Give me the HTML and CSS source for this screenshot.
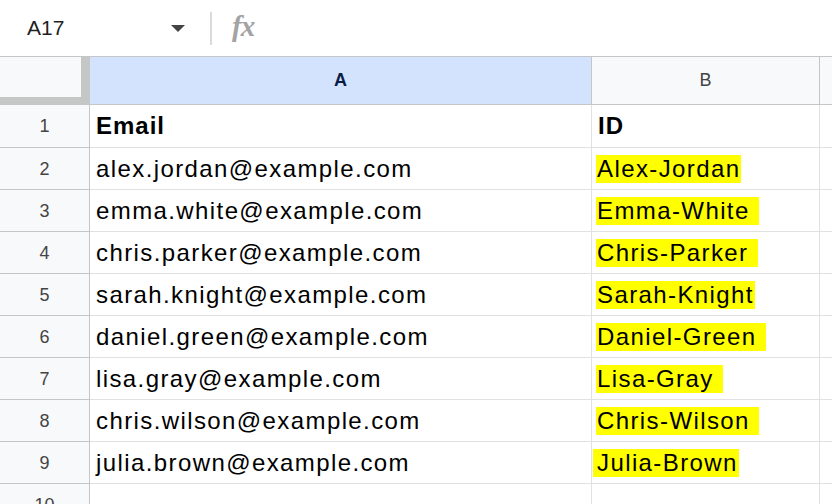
FILE: index.html
```html
<!DOCTYPE html>
<html lang="en">
<head>
  <meta charset="UTF-8">
  <title>Sheet</title>
  <link rel="stylesheet" href="styles.css">
</head>
<body>
  <div class="toolbar">
    <div class="name-box">A17</div>
    <span class="caret"></span>
    <span class="divider"></span>
    <span class="fx">fx</span>
  </div>

  <div class="sheet">
    <div class="corner"></div>
    <div class="col-head selected">A</div>
    <div class="col-head">B</div>
    <div class="col-head last"></div>

    <div class="row-head">1</div>
    <div class="cell bold">Email</div>
    <div class="cell bold">ID</div>
    <div class="cell last"></div>

    <div class="row-head">2</div>
    <div class="cell">alex.jordan@example.com</div>
    <div class="cell"><span class="mark">Alex-Jordan</span></div>
    <div class="cell last"></div>

    <div class="row-head">3</div>
    <div class="cell">emma.white@example.com</div>
    <div class="cell"><span class="mark">Emma-White </span></div>
    <div class="cell last"></div>

    <div class="row-head">4</div>
    <div class="cell">chris.parker@example.com</div>
    <div class="cell"><span class="mark">Chris-Parker </span></div>
    <div class="cell last"></div>

    <div class="row-head">5</div>
    <div class="cell">sarah.knight@example.com</div>
    <div class="cell"><span class="mark">Sarah-Knight</span></div>
    <div class="cell last"></div>

    <div class="row-head">6</div>
    <div class="cell">daniel.green@example.com</div>
    <div class="cell"><span class="mark">Daniel-Green </span></div>
    <div class="cell last"></div>

    <div class="row-head">7</div>
    <div class="cell">lisa.gray@example.com</div>
    <div class="cell"><span class="mark">Lisa-Gray </span></div>
    <div class="cell last"></div>

    <div class="row-head">8</div>
    <div class="cell">chris.wilson@example.com</div>
    <div class="cell"><span class="mark">Chris-Wilson </span></div>
    <div class="cell last"></div>

    <div class="row-head">9</div>
    <div class="cell">julia.brown@example.com</div>
    <div class="cell"><span class="mark lead">Julia-Brown</span></div>
    <div class="cell last"></div>

    <div class="row-head">10</div>
    <div class="cell"></div>
    <div class="cell"></div>
    <div class="cell last"></div>
  </div>
</body>
</html>
```

FILE: styles.css
```css
:root {
  --head-line: #c4c7c5;
  --cell-line: #e1e1e1;
  --head-bg: #f8f9fa;
  --selected-bg: #d3e3fd;
  --mark: #ffff00;
}

* {
  box-sizing: border-box;
}

body {
  margin: 0;
  font-family: "Liberation Sans", Arial, sans-serif;
  background: #fff;
  overflow: hidden;
}

.toolbar {
  display: flex;
  align-items: center;
  height: 57px;
  border-bottom: 1px solid var(--head-line);
}

.name-box {
  width: 171px;
  padding-left: 27px;
  font-size: 21px;
  color: #1f1f1f;
}

.caret {
  width: 0;
  height: 0;
  border-left: 7px solid transparent;
  border-right: 7px solid transparent;
  border-top: 7px solid #444;
  margin-top: 1px;
}

.divider {
  width: 2px;
  height: 33px;
  background: #dadada;
  margin-left: 25px;
}

.fx {
  margin-left: 20px;
  margin-top: -3px;
  font-family: "Liberation Serif", serif;
  font-style: italic;
  font-weight: bold;
  font-size: 29px;
  color: #a3a3a3;
  letter-spacing: -1px;
}

.sheet {
  display: grid;
  grid-template-columns: 90px 502px 228px 1fr;
  grid-template-rows: 48px 43px;
  grid-auto-rows: 42px;
}

.sheet > div {
  display: flex;
  align-items: center;
  border-right: 1px solid var(--cell-line);
  border-bottom: 1px solid var(--cell-line);
}

.sheet > .last {
  border-right: none;
}

.corner {
  background: var(--head-bg);
  border-right: 9px solid var(--head-line) !important;
  border-bottom: 8px solid var(--head-line) !important;
}

.col-head {
  justify-content: center;
  background: var(--head-bg);
  border-right-color: var(--head-line) !important;
  border-bottom-color: var(--head-line) !important;
  font-size: 18px;
  color: #444;
}

.col-head.selected {
  background: var(--selected-bg);
  color: #0b1d46;
  font-weight: bold;
}

.row-head {
  justify-content: center;
  background: var(--head-bg);
  border-right-color: var(--head-line) !important;
  border-bottom-color: var(--head-line) !important;
  font-size: 18px;
  color: #444;
  padding-top: 1px;
}

.cell {
  padding-left: 6px;
  font-size: 24px;
  letter-spacing: 1.4px;
  color: #000;
  white-space: pre;
  overflow: hidden;
}

.bold {
  font-weight: bold;
  letter-spacing: 1px;
}

.mark {
  background: var(--mark);
  padding: 0 1px;
  margin-left: -2px;
}

.mark.lead {
  padding-left: 4px;
  margin-left: -5px;
}
```
